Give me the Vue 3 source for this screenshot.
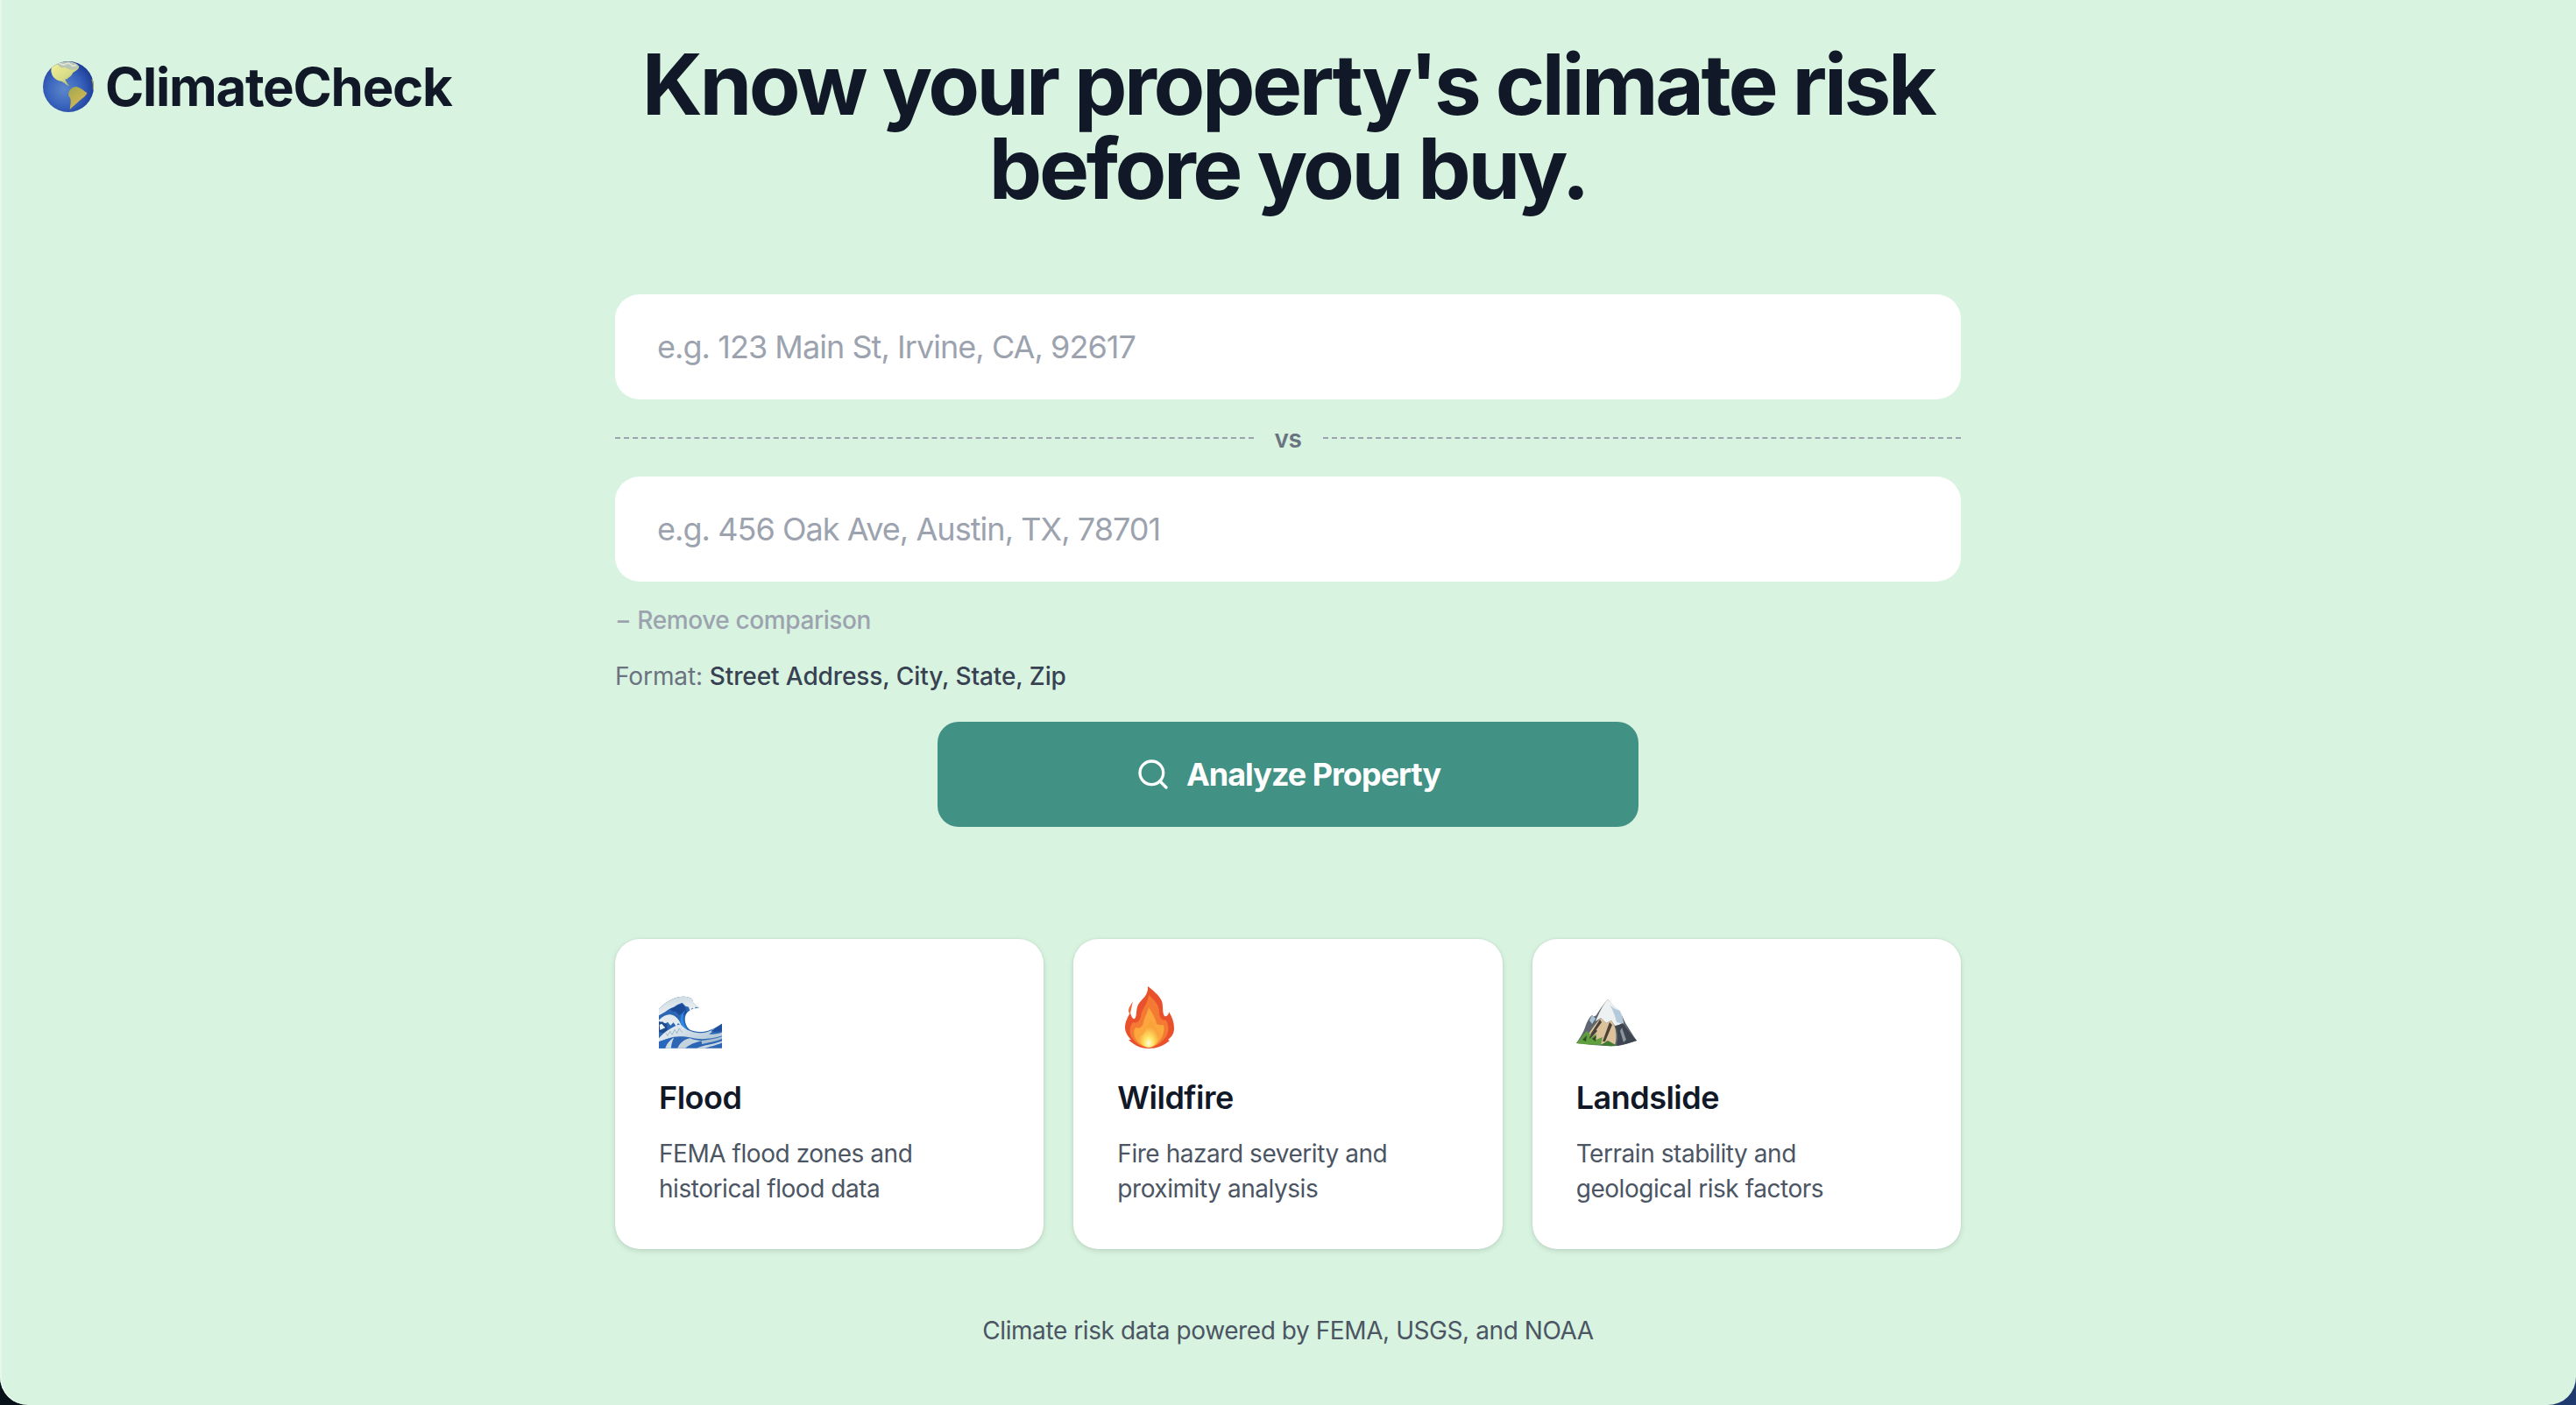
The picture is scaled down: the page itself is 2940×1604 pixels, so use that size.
<script setup>
const features = [
  { key: 'flood', title: 'Flood', lines: ['FEMA flood zones and', 'historical flood data'] },
  { key: 'fire', title: 'Wildfire', lines: ['Fire hazard severity and', 'proximity analysis'] },
  { key: 'mountain', title: 'Landslide', lines: ['Terrain stability and', 'geological risk factors'] }
]
</script>

<template>
  <div class="desktop">
    <div class="page">
      <div class="brand">
        <svg class="globe" viewBox="58 60 174 174" aria-hidden="true">
          <defs>
            <radialGradient id="ocean" cx="0.42" cy="0.55" r="0.62">
              <stop offset="0" stop-color="#5d87c9" />
              <stop offset="0.55" stop-color="#3863bd" />
              <stop offset="0.9" stop-color="#21429c" />
              <stop offset="1" stop-color="#182f7c" />
            </radialGradient>
            <linearGradient id="landN" x1="0" y1="0" x2="1" y2="1">
              <stop offset="0" stop-color="#f6f09a" />
              <stop offset="0.55" stop-color="#d8dc86" />
              <stop offset="1" stop-color="#86a966" />
            </linearGradient>
            <linearGradient id="landS" x1="0.2" y1="0" x2="0.8" y2="1">
              <stop offset="0" stop-color="#a5a94f" />
              <stop offset="0.6" stop-color="#c9b455" />
              <stop offset="1" stop-color="#8f9650" />
            </linearGradient>
            <clipPath id="globeClip"><circle cx="145" cy="147" r="87" /></clipPath>
          </defs>
          <circle cx="145" cy="147" r="87" fill="url(#ocean)" />
          <g clip-path="url(#globeClip)">
            <path d="M92 76 C104 68 122 64 130 68 C146 60 172 64 182 80 C176 92 166 94 160 100 C156 112 146 114 140 122 C130 116 136 130 148 144 C138 142 132 132 120 128 C104 126 92 116 88 102 C84 92 86 84 92 76 Z" fill="url(#landN)" />
            <path d="M106 68 C122 58 168 56 182 78 C172 86 164 92 154 88 C146 92 138 78 128 82 C120 84 112 76 106 68 Z" fill="#b8c6b4" />
            <path d="M112 66 L128 72 L146 66 L160 76 L172 74" stroke="#dfe3d8" stroke-width="5" fill="none" />
            <path d="M146 168 C150 154 164 144 176 148 C190 152 200 164 209 168 C204 182 190 188 180 198 C172 206 160 214 150 226 C152 210 156 194 150 184 C146 178 144 174 146 168 Z" fill="url(#landS)" />
            <path d="M224 122 L236 122 L236 158 L228 156 C230 144 228 132 224 122 Z" fill="#b6a84c" />
          </g>
        </svg>
        <span class="brand-name">ClimateCheck</span>
      </div>

      <main class="column">
        <h1 class="headline">Know your property's climate risk<br />before you buy.</h1>

        <input class="address" type="text" placeholder="e.g. 123 Main St, Irvine, CA, 92617" />
        <div class="versus"><span class="dash"></span><span class="vs">vs</span><span class="dash"></span></div>
        <input class="address" type="text" placeholder="e.g. 456 Oak Ave, Austin, TX, 78701" />

        <div class="remove">− Remove comparison</div>
        <div class="format">Format: <span class="format-value">Street Address, City, State, Zip</span></div>

        <button class="analyze" type="button">
          <svg class="search" viewBox="0 0 24 24" fill="none" stroke="#fff" stroke-width="2" stroke-linecap="round" stroke-linejoin="round" aria-hidden="true">
            <circle cx="11" cy="11" r="8" />
            <path d="M21 21l-4.35-4.35" />
          </svg>
          <span>Analyze Property</span>
        </button>

        <section class="cards">
          <article v-for="f in features" :key="f.key" class="card">
            <div class="icon-box">
              <svg v-if="f.key === 'flood'" class="wave" viewBox="20 25 217 180" aria-hidden="true">
                <defs>
                  <linearGradient id="foam" x1="0" y1="0" x2="0.4" y2="1">
                    <stop offset="0" stop-color="#c6d5de" />
                    <stop offset="1" stop-color="#f0f4f6" />
                  </linearGradient>
                  <linearGradient id="sweep" x1="0" y1="0" x2="1" y2="0.4">
                    <stop offset="0" stop-color="#eef3f6" />
                    <stop offset="1" stop-color="#b7cbda" />
                  </linearGradient>
                </defs>
                <path d="M20 70 C40 48 70 28 100 27 C125 25 138 35 138 48 L158 66 C140 66 125 72 115 85 C106 100 108 125 125 140 C160 158 200 145 237 120 L237 205 L20 205 Z" fill="#2d66b4" />
                <path d="M20 70 C40 48 70 28 100 27 C125 25 138 35 138 48 L158 66 L146 62 L143 72 L134 66 L128 78 L122 62 L112 60 L100 48 L85 54 L72 62 L55 70 L40 80 L20 92 Z" fill="url(#foam)" />
                <path d="M58 70 L72 64 L85 56 L100 52 L110 64 L116 80 L106 92 L98 84 L90 90 L78 78 L68 78 Z" fill="#1b4a96" />
                <path d="M112 72 C100 88 98 116 118 140 L100 132 C90 112 92 86 112 72 Z" fill="#2f8ae6" />
                <path d="M20 108 C35 92 55 84 70 92 C85 100 92 112 97 126 L86 118 L80 130 L70 116 L60 126 L50 114 L40 122 L32 112 L20 120 Z" fill="#e4ebef" />
                <path d="M20 112 L34 116 L46 120 L50 142 L36 152 L20 148 Z" fill="#1f4a8c" />
                <path d="M22 124 L30 120 L36 128 L42 134 L32 138 L24 142 Z" fill="#eef2f5" />
                <path d="M20 170 C38 150 65 130 94 122 C110 140 126 146 142 150 C170 156 195 148 212 136 C205 148 200 152 192 156 C210 158 225 155 237 150 L237 162 C200 174 160 176 130 168 C100 161 70 163 55 170 L20 182 Z" fill="url(#sweep)" />
                <path d="M44 152 L50 162 L58 146 L66 158 L74 140 L82 154 L90 136 L100 150" stroke="#9db6c8" stroke-width="3" fill="none" />
                <path d="M20 182 L55 170 C46 182 42 195 42 205 L20 205 Z" fill="#2a68c0" />
                <path d="M42 205 C46 190 58 176 72 168 C66 180 62 194 62 205 Z" fill="#cfdde6" />
                <path d="M84 205 C92 186 106 174 128 170 C140 176 155 178 168 178 C144 184 124 192 110 205 Z" fill="#c3d4df" />
                <path d="M166 178 C190 176 215 172 237 164 L237 172 C212 182 186 186 168 190 Z" fill="#a9c0d1" />
                <path d="M150 205 C172 194 205 192 237 180 L237 186 C212 196 194 199 178 205 Z" fill="#c9d8e2" />
                <path d="M237 120 C226 128 212 138 198 146 C212 150 226 148 237 144 Z" fill="#1f4f9c" />
              </svg>

              <svg v-else-if="f.key === 'fire'" class="flame" viewBox="0 0 56 71" aria-hidden="true">
                <defs>
                  <radialGradient id="core" cx="0.5" cy="0.85" r="0.55">
                    <stop offset="0" stop-color="#fffde8" />
                    <stop offset="0.35" stop-color="#ffe96a" />
                    <stop offset="1" stop-color="#f9a23a" />
                  </radialGradient>
                </defs>
                <path d="M26 0 C31 4 39 10 42 17 C44 23 42 29 45 34 C48 35 50 32 50 29 C54 35 56 42 56 48 C56 54 53 58 49 61 L51 62 C44 68 36 71 27 71 C19 71 11 68 4 61 L7 61 C3 57 0 52 0 47 C0 41 3 35 6 30 C7 34 9 38 11 37 C14 34 12 27 15 21 C18 15 27 11 26 0 Z" fill="#e9512c" />
                <path d="M9 17 C7 21 4 24 4 28 C4 30 5 31 6 31 C7 26 8 22 9 17 Z" fill="#ee6a3c" />
                <path d="M27 10 C33 15 39 21 39 29 C39 36 42 39 47 39 C51 46 50 55 44 61 C38 67 33 70 27 70 C20 70 13 66 9 60 C4 54 5 46 9 41 C13 43 17 40 18 34 C19 26 26 20 27 10 Z" fill="#f47a33" />
                <path d="M27 24 C31 30 35 37 36 43 C40 45 43 44 44 44 C46 52 42 61 36 66 C32 69 22 69 17 66 C11 61 8 53 12 47 C16 49 20 47 21 41 C22 35 26 30 27 24 Z" fill="#fba73d" />
                <path d="M29 36 C32 42 35 48 38 53 C40 60 36 69 27 70 C19 69 14 62 16 55 C18 57 20 56 22 53 C25 48 28 42 29 36 Z" fill="url(#core)" />
              </svg>

              <svg v-else class="mountain" viewBox="0 0 69 54" aria-hidden="true">
                <path d="M36 0 C40 4 44 10 48 12 C52 16 54 24 58 30 C62 36 66 43 69 47 C62 49 54 52 46 53 C30 54 14 51 0 50 C4 44 8 38 10 32 C12 26 15 20 18 18 C20 20 22 20 24 16 C28 10 32 4 36 0 Z" fill="#5f6670" />
                <path d="M18 18 C20 19 21 21 22 22 L18 28 L15 24 Z" fill="#a9c3d6" />
                <path d="M36 0 C41 5 45 11 50 13 C52 18 53 22 54 28 L44 30 L40 24 L34 27 L28 21 L22 25 C26 16 30 6 36 0 Z" fill="#eef1f2" />
                <path d="M38 6 C42 10 46 12 50 13 C52 18 53 22 54 28 L46 26 C44 18 42 12 38 6 Z" fill="#b4c9da" />
                <path d="M28 21 L34 27 L40 24 L44 31 C46 40 46 46 44 52 L8 50 C12 42 18 32 28 21 Z" fill="#dcc29a" />
                <path d="M27 23 L16 40 L19 40 L29 26 Z M38 26 L30 48 L33 48 L41 29 Z M22 34 L12 46 L15 46 L24 36 Z" fill="#4a4238" />
                <path d="M44 31 L53 27 C58 34 64 42 69 47 C62 49 54 52 46 53 C48 44 48 36 44 31 Z" fill="#3d4650" />
                <path d="M52 32 L57 46 L54 49 L50 36 Z" fill="#8a949c" />
                <path d="M0 50 C4 46 8 40 12 36 L16 40 L15 45 L23 39 L20 47 L30 43 L28 52 C18 52 8 51 0 50 Z" fill="#5f9f3e" />
                <path d="M28 52 L36 47 L45 52 C46 53 38 54 28 52 Z" fill="#3f7a30" />
                <path d="M7 46 L12 41 L11 48 Z M18 45 L23 41 L22 48 Z" fill="#2f4d26" />
              </svg>
            </div>
            <h3 class="card-title">{{ f.title }}</h3>
            <p class="card-text">{{ f.lines[0] }}<br />{{ f.lines[1] }}</p>
          </article>
        </section>

        <footer class="source">Climate risk data powered by FEMA, USGS, and NOAA</footer>
      </main>
    </div>
  </div>
</template>

<style>
html, body { margin: 0; background: #0b1420; }
</style>

<style scoped>
.desktop {
  width: 2940px;
  height: 1604px;
  overflow: hidden;
  background: linear-gradient(90deg, #081019 0%, #0b1420 40%, #1e3a6e 98%);
  font-family: Inter, "Noto Sans", sans-serif;
}
.page {
  height: 1604px;
  box-sizing: border-box;
  display: grid;
  grid-template-columns: 1fr 1536px 1fr;
  background: #d8f3e0;
  border-radius: 0 0 32px 32px;
  box-shadow: inset 2px 0 0 #e6f7ec;
}
.brand {
  display: flex;
  align-items: center;
  gap: 13px;
  align-self: start;
  padding: 70px 0 0 49px;
  height: 58px;
}
.globe { width: 58px; height: 58px; flex: none; }
.brand-name {
  font-size: 60px;
  font-weight: 740;
  letter-spacing: -1.3px;
  color: #111827;
  line-height: 58px;
}
.column {
  display: flex;
  flex-direction: column;
  align-items: stretch;
}
.headline {
  margin: 48px 0 96px;
  font-size: 96px;
  line-height: 96px;
  font-weight: 730;
  letter-spacing: -3.4px;
  text-align: center;
  color: #111827;
}
.address {
  display: block;
  box-sizing: border-box;
  width: 100%;
  height: 120px;
  padding: 0 48px;
  border: 0;
  border-radius: 28px;
  background: #fff;
  font: 400 36px Inter, sans-serif;
  letter-spacing: -0.95px;
  color: #111827;
  outline: none;
}
.address::placeholder { color: #9ca3af; opacity: 1; }
.versus {
  height: 88px;
  display: flex;
  align-items: center;
  gap: 24px;
}
.dash { flex: 1; border-top: 2px dashed #9ca3af; }
.vs { font-size: 28px; font-weight: 600; color: #6b7280; line-height: 32px; padding-top: 2px; letter-spacing: -0.4px; }
.remove {
  margin-top: 24px;
  font-size: 28px;
  line-height: 40px;
  font-weight: 500;
  letter-spacing: -0.4px;
  color: #9ca3af;
}
.format {
  margin-top: 24px;
  font-size: 28px;
  line-height: 40px;
  letter-spacing: -0.1px;
  color: #6b7280;
}
.format-value { font-weight: 500; color: #374151; }
.analyze {
  align-self: center;
  margin-top: 32px;
  width: 800px;
  height: 120px;
  display: flex;
  align-items: center;
  justify-content: center;
  gap: 18px;
  border: 0;
  border-radius: 24px;
  background: #429185;
  color: #fff;
  font: 650 36px Inter, sans-serif;
  letter-spacing: -1px;
}
.search { width: 40px; height: 40px; flex: none; }
.cards {
  margin-top: 128px;
  display: grid;
  grid-template-columns: repeat(3, 1fr);
  gap: 34px;
}
.card {
  box-sizing: border-box;
  height: 354px;
  padding: 48px 48px 0 50px;
  background: #fff;
  border-radius: 28px;
  box-shadow: 0 2px 6px rgba(0, 0, 0, 0.12), 0 0 2px rgba(0, 0, 0, 0.08);
}
.icon-box {
  height: 77px;
  display: flex;
  align-items: flex-end;
}
.wave { width: 72px; height: 60px; display: block; }
.flame { width: 56px; height: 71px; display: block; margin-left: 9px; }
.mountain { width: 69px; height: 54px; display: block; margin-bottom: 2px; }
.card-title {
  margin: 32px 0 0;
  font-size: 36px;
  line-height: 48px;
  font-weight: 600;
  letter-spacing: -0.5px;
  color: #111827;
}
.card-text {
  margin: 20px 0 0;
  font-size: 28px;
  line-height: 40px;
  letter-spacing: -0.45px;
  color: #4b5563;
}
.source {
  margin-top: 73px;
  text-align: center;
  font-size: 28px;
  line-height: 40px;
  letter-spacing: -0.42px;
  color: #4b5563;
}
</style>
